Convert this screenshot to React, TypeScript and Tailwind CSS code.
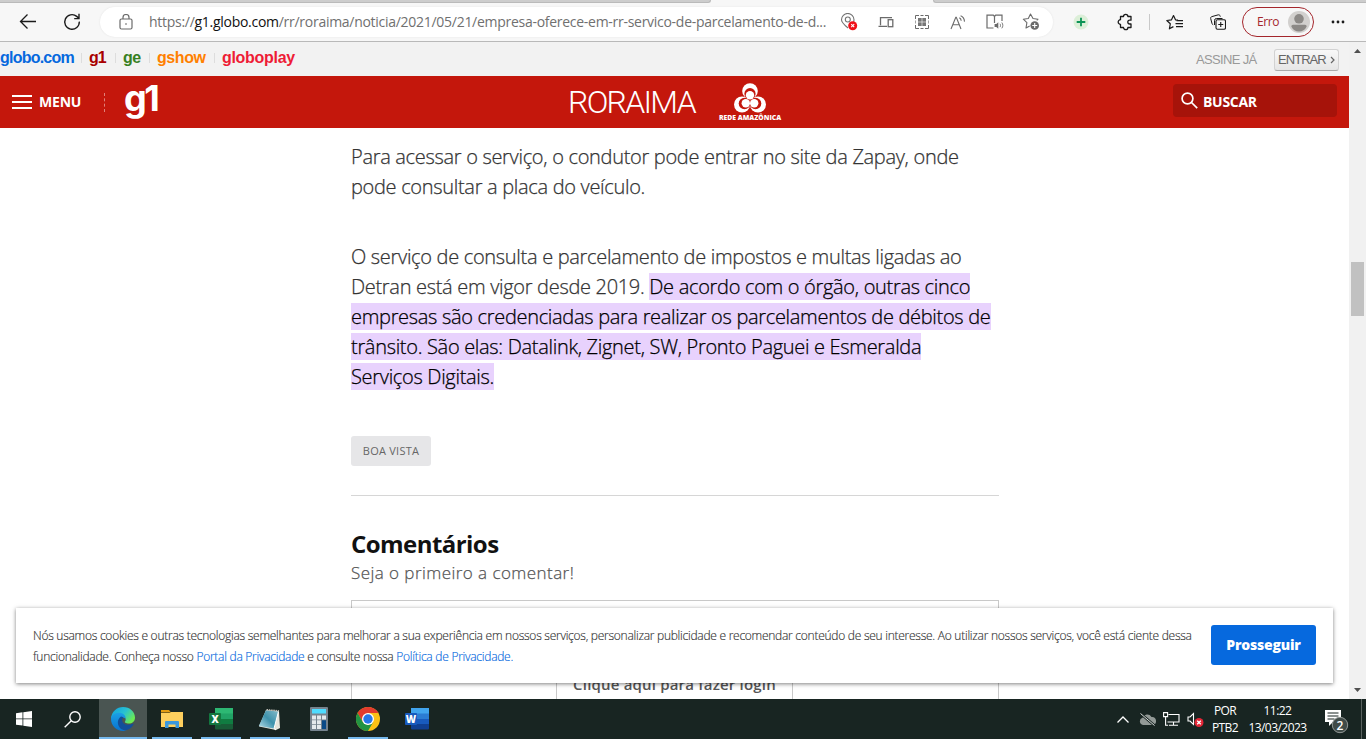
import React from "react";

const OPEN = "font-['Open_Sans',sans-serif]";
const LIB = "font-['Liberation_Sans',sans-serif]";

function Slot({ w, children }: { w: string; children: React.ReactNode }) {
  return <div className={`flex h-full shrink-0 items-center justify-center ${w}`}>{children}</div>;
}

function BrowserBar() {
  return (
    <div className={`flex h-[42px] flex-col border-b border-[#b9b9b9] bg-[#f7f7f7] ${OPEN}`}>
      <div className="flex h-[3px] shrink-0 justify-between">
        <div className="w-[711px] rounded-br-[3px] border-b border-r border-[#bababa] bg-[#cdcdcd]" />
        <div className="w-[433px] rounded-bl-[3px] border-b border-l border-[#bababa] bg-[#cdcdcd]" />
      </div>
      <div className="flex h-[38px] items-center">
        <Slot w="w-[56px]">
          <svg width="18" height="18" viewBox="0 0 18 18" fill="none" stroke="#1b1b1b" strokeWidth="1.3">
            <path d="M17 8.500H1.500M8.500 1.500l-7 7 7 7" />
          </svg>
        </Slot>
        <Slot w="w-[32px]">
          <svg width="18" height="18" viewBox="0 0 18 18" fill="none" stroke="#1b1b1b" strokeWidth="1.4">
            <path d="M16.300 8.600A7.300 7.300 0 1 1 13.700 3.400L15.800 5.300M16 .8v4.800h-4.800" />
          </svg>
        </Slot>
        <div className="ml-[12px] flex h-[30px] w-[953px] items-center rounded-full bg-white shadow-[0_0_2px_#e2e2e2]">
          <Slot w="w-[52px]">
            <svg width="14" height="16" viewBox="0 0 14 16" fill="none" stroke="#6b6b6b" strokeWidth="1.200">
              <rect x="1" y="5" width="12" height="10" rx="1.500" />
              <path d="M4 5V3.500a3 3 0 0 1 6 0V5" />
              <circle cx="7" cy="10" r=".8" fill="#555" stroke="none" />
            </svg>
          </Slot>
          <div className="w-[679px] whitespace-nowrap text-[14px] leading-[20px] tracking-[-0.28px] text-[#707070]">
            <span className="-ml-[3px]">https://</span>
            <span className="text-[#111]">g1.globo.com</span>/rr/roraima/noticia/2021/05/21/empresa-oferece-em-rr-servico-de-parcelamento-de-d...
          </div>
          <Slot w="w-[36.4px]">
            <svg width="18" height="18" viewBox="0 0 18 18" fill="none" stroke="#737373" strokeWidth="1.100">
              <path d="M8 15C4.500 12 1.500 9.500 1.500 6.700A6.200 6.200 0 0 1 14 6.700c0 .8-.2 1.500-.5 2.200" />
              <circle cx="7.800" cy="6.500" r="2.500" />
              <circle cx="12.700" cy="12.700" r="4.500" fill="#f01018" stroke="none" />
              <path d="M11.200 11.200l3 3m0-3l-3 3" stroke="#fff" />
            </svg>
          </Slot>
          <Slot w="w-[36.4px]">
            <svg width="16" height="12" viewBox="0 0 16 12" fill="none" stroke="#6b6b6b" strokeWidth="1.300">
              <path d="M14 1.700H2.500v7.600M.5 10.300H9" />
              <rect x="10.200" y="3.700" width="4.600" height="7" />
            </svg>
          </Slot>
          <Slot w="w-[36.4px]">
            <svg width="14" height="14" viewBox="0 0 14 14" fill="none" stroke="#6b6b6b">
              <path d="M.5 4V.5H4M5.500 .5h3M10 .5h3.500V4M13.500 10v3.500H10M8.500 13.500h-3M4 13.500H.5V10" />
              <path d="M.5 5.500v3M13.500 5.500v3" stroke="#a5a5a5" />
              <g fill="#777" stroke="none">
                <rect x="3" y="3" width="3.700" height="3.700" />
                <rect x="7.300" y="3" width="3.700" height="3.700" />
                <rect x="3" y="7.300" width="3.700" height="3.700" />
                <rect x="7.300" y="7.300" width="3.700" height="3.700" />
              </g>
            </svg>
          </Slot>
          <Slot w="w-[36.4px]">
            <svg width="16" height="15" viewBox="0 0 16 15" fill="none" stroke="#6b6b6b" strokeWidth="1.100">
              <path d="M1 14L5.800 2.200h.5L11 14M2.600 9.700h6.900M9.300 2.800c1.200.6 1.800 1.600 1.900 2.900M10.600.8c2.300.9 3.700 2.800 3.900 5.800" />
            </svg>
          </Slot>
          <Slot w="w-[36.4px]">
            <svg width="18" height="16" viewBox="0 0 18 16" fill="none" stroke="#6b6b6b" strokeWidth="1.200">
              <path d="M7.500 14H1V1.200h6.300L8.500 2.500l1.200-1.300H16V7M8.500 2.500V9" />
              <path d="M8.600 10h1.700l2-1.700v6.400l-2-1.700H8.600z" fill="#6b6b6b" stroke="none" />
              <path d="M14 9.800c.7 1 .7 2.300 0 3.300M15.800 8.500c1.400 1.800 1.400 4 0 5.800" strokeWidth=".9" />
            </svg>
          </Slot>
          <Slot w="w-[36.4px]">
            <svg width="18" height="18" viewBox="0 0 18 18" fill="none" stroke="#6b6b6b" strokeWidth="1.100" strokeLinejoin="round">
              <path d="M14.800 7.300l1.200-1.100-5-.7L8.500 1 6.300 5.500l-5 .7L4.900 9.700 4 15l3.700-2" />
              <circle cx="12.700" cy="12.500" r="4.300" fill="#6b6b6b" stroke="none" />
              <path d="M12.700 10v5m-2.500-2.500h5" stroke="#fff" />
            </svg>
          </Slot>
        </div>
        <Slot w="ml-[6px] w-[44px]">
          <svg width="16" height="16" viewBox="0 0 16 16">
            <circle cx="8" cy="8" r="7.500" fill="#dcefd8" />
            <path d="M8 3.700v8.600M3.700 8h8.600" stroke="#0c9356" strokeWidth="1.800" />
          </svg>
        </Slot>
        <Slot w="w-[44px]">
          <svg width="17" height="18" viewBox="0 0 17 18" fill="none" stroke="#1b1b1b" strokeWidth="1.300" strokeLinejoin="round">
            <path d="M3.500 3.500h3a2.200 2.200 0 0 1 4.400 0H14v3.700h-1.300a1.900 1.900 0 0 0 0 3.800H14v3.500h-3.100a2.200 2.200 0 0 1-4.400 0h-3v-3.200A2.300 2.300 0 0 1 3.500 6.700z" />
          </svg>
        </Slot>
        <div className="ml-[2px] mr-[2px] h-[16px] w-px bg-[#c9c9c9]" />
        <Slot w="w-[44px]">
          <svg width="17" height="17" viewBox="0 0 17 17" fill="none" stroke="#1b1b1b" strokeWidth="1.200" strokeLinejoin="round">
            <path d="M12 6.200l-2.500-.4L7.500 1.500 5.500 5.800.8 6.500l3.500 3.300-.9 5 4-2.200M10.500 6.700H17M9.500 9.700H17M10 12.700h7" />
          </svg>
        </Slot>
        <Slot w="w-[44px]">
          <svg width="16" height="16" viewBox="0 0 16 16" fill="none" stroke="#1b1b1b" strokeWidth="1.100">
            <path d="M3.200 10.800Q2.300 10.500 2 9.500L.7 4.600c-.3-1 .2-1.700 1.200-2L8 .9c1-.3 1.900.1 2.100 1.100l.2.700M12.500 4.500H6.500a2 2 0 0 0-2 2V11" strokeWidth="1" />
            <rect x="6" y="5.800" width="9.500" height="9.500" rx="1.500" />
            <path d="M10.750 8v5M8.250 10.500h5" />
          </svg>
        </Slot>
        <div className="ml-[2px] flex h-[30px] w-[72px] items-center justify-between rounded-full border border-[#a4262c] pl-[14px] pr-[3px]">
          <span className="text-[12px] tracking-[-0.4px] text-[#a4262c]">Erro</span>
          <svg width="22" height="22" viewBox="0 0 22 22">
            <circle cx="11" cy="11" r="11" fill="#d2d0ce" />
            <circle cx="11" cy="7.800" r="4.800" fill="#8c8986" />
            <path d="M3.300 15.500q0-1.700 1.700-1.700h12q1.700 0 1.700 1.700-2.500 5-7.700 5t-7.700-5z" fill="#8c8986" />
          </svg>
        </div>
        <Slot w="ml-[2px] w-[44px]">
          <svg width="14" height="4" viewBox="0 0 14 4" fill="#1b1b1b">
            <circle cx="2" cy="2" r="1.400" />
            <circle cx="7" cy="2" r="1.400" />
            <circle cx="12" cy="2" r="1.400" />
          </svg>
        </Slot>
      </div>
    </div>
  );
}

function GloboBar() {
  return (
    <div className={`flex h-[34px] items-center bg-[#f2f2f2] pb-[3px] text-[16px] font-bold ${LIB}`}>
      <div className="w-[81px] tracking-[-0.78px] text-[#0669de]">globo.com</div>
      <div className="h-[10px] w-px bg-[#ddd]" />
      <div className="w-[33px] pl-[7px] tracking-[-0.9px] text-[#a80000]">g1</div>
      <div className="h-[10px] w-px bg-[#ddd]" />
      <div className="w-[33px] pl-[7px] tracking-[-0.5px] text-[#37801f]">ge</div>
      <div className="h-[10px] w-px bg-[#ddd]" />
      <div className="w-[64px] pl-[7px] tracking-[-0.4px] text-[#ff8000]">gshow</div>
      <div className="h-[10px] w-px bg-[#ddd]" />
      <div className="pl-[7px] tracking-[-0.3px] text-[#ee1c36]">globoplay</div>
      <div className={`ml-auto flex items-center pr-[10px] pt-[5px] text-[13px] font-normal ${LIB}`}>
        <span className="w-[78px] tracking-[-0.65px] text-[#999]">ASSINE JÁ</span>
        <span className="flex h-[22px] w-[65px] items-center justify-between rounded-[3px] border border-[#d2d2d2] border-b-[#aaa] bg-gradient-to-b from-[#f8f8f8] to-[#e6e6e6] px-[3px] text-[#666]">
          <span className="tracking-[-0.95px]">ENTRAR</span>
          <svg width="5" height="8" viewBox="0 0 5 8" fill="none" stroke="#666" strokeWidth="1.200">
            <path d="M1 1l3 3-3 3" />
          </svg>
        </span>
      </div>
    </div>
  );
}

function RedeLogo() {
  return (
    <div className="flex w-[64px] flex-col items-center">
      <svg width="34" height="31" viewBox="0 0 34 31">
        <circle cx="17" cy="8" r="7.800" fill="#fff" />
        <circle cx="9" cy="21.500" r="8" fill="#fff" />
        <circle cx="25" cy="21.500" r="8" fill="#fff" />
        <g fill="#c4170c">
          <circle cx="17" cy="10.700" r="5.600" />
          <circle cx="11.500" cy="20.500" r="5.800" />
          <circle cx="22.500" cy="20.500" r="5.800" />
        </g>
        <g fill="#fff">
          <circle cx="17" cy="12.300" r="4.200" />
          <circle cx="12.800" cy="20.300" r="4.200" />
          <circle cx="21.200" cy="20.300" r="4.200" />
        </g>
      </svg>
      <div className={`whitespace-nowrap text-[6.800px] font-extrabold leading-[8px] text-white ${OPEN}`}>REDE AMAZÔNICA</div>
    </div>
  );
}

function Header() {
  return (
    <div className={`flex h-[52px] items-center bg-[#c4170c] text-white ${OPEN}`}>
      <svg className="ml-[12px]" width="20" height="14" viewBox="0 0 20 14" fill="#fff">
        <path d="M0 0h20v2H0zM0 6h20v2H0zM0 12h20v2H0z" />
      </svg>
      <span className="ml-[7px] w-[65px] pb-[1px] text-[14px] font-bold tracking-[-0.2px]">MENU</span>
      <div className="h-[19px] border-l border-dashed border-[#e08079]" />
      <div className="ml-[19px] w-[46px] pb-[8px] font-['Inter',sans-serif] text-[36px] font-bold leading-[40px] tracking-[-2.500px]">g1</div>
      <div className="ml-[398px] w-[149px] font-['Roboto',sans-serif] text-[32px] font-light leading-[40px] tracking-[-1.700px]">RORAIMA</div>
      <div className="pl-px pt-px"><RedeLogo /></div>
      <div className="mb-[3px] ml-auto mr-[12px] flex h-[33px] w-[164px] items-center rounded-[4px] bg-[#a6130a] pl-[8px]">
        <svg width="17" height="17" viewBox="0 0 17 17" fill="none" stroke="#fff" strokeWidth="1.700">
          <circle cx="6.500" cy="6.500" r="5.400" />
          <path d="M10.500 10.500l5.700 5.700" />
        </svg>
        <span className="ml-[5px] pt-[2px] text-[14px] font-bold tracking-[-0.3px]">BUSCAR</span>
      </div>
    </div>
  );
}

function Article() {
  return (
    <div className={`ml-[351px] w-[648px] pt-[14px] ${OPEN}`}>
      <p className="whitespace-nowrap text-[20px] font-light leading-[30px] tracking-[-0.31px] text-[#333] [-webkit-text-stroke:0.25px_#333]">
        Para acessar o serviço, o condutor pode entrar no site da Zapay, onde
        <br />
        pode consultar a placa do veículo.
      </p>
      <p className="mt-[40px] whitespace-nowrap text-[20px] font-light leading-[30px] tracking-[-0.31px] text-[#333] [-webkit-text-stroke:0.25px_#333]">
        O serviço de consulta e parcelamento de impostos e multas ligadas ao
        <br />
        Detran está em vigor desde 2019.{" "}
        <span className="bg-[#e8d2fd] text-black [-webkit-text-stroke:0.25px_#000]">
          De acordo com o órgão, outras cinco
          <br />
          empresas são credenciadas para realizar os parcelamentos de débitos de
          <br />
          trânsito. São elas: Datalink, Zignet, SW, Pronto Paguei e Esmeralda
          <br />
          Serviços Digitais.
        </span>
      </p>
      <div className="mt-[44px] flex h-[30px] w-[80px] items-center justify-center rounded-[3px] bg-[#e6e6e8] text-[11px] tracking-[0.25px] text-[#666]">
        BOA VISTA
      </div>
      <div className="mt-[29px] h-px bg-[#d6d6d6]" />
      <h2 className="mt-[32px] text-[24px] font-bold leading-[32px] tracking-[-0.55px] text-[#111]">Comentários</h2>
      <p className="text-[17px] font-light leading-[26px] tracking-[0.44px] text-[#555] [-webkit-text-stroke:0.25px_#555]">Seja o primeiro a comentar!</p>
      <div className="mt-[14px] flex h-[110px] justify-center border border-[#c9c9c9]">
        <div className="mr-px mt-[66px] w-[237px] border border-[#c9c9c9] pt-[4px] text-center text-[15px] font-semibold leading-[24px] tracking-[0.18px] text-[#555]">
          Clique aqui para fazer login
        </div>
      </div>
    </div>
  );
}

function CookieBanner() {
  return (
    <div className={`absolute left-[16px] top-[480px] flex h-[75px] w-[1317px] items-center bg-white pl-[17px] pr-[17px] shadow-[0_1px_4px_rgba(0,0,0,0.5)] ${OPEN}`}>
      <p className="flex-1 whitespace-nowrap pt-px text-[12px] font-light leading-[21px] tracking-[-0.26px] text-[#333] [-webkit-text-stroke:0.15px]">
        Nós usamos cookies e outras tecnologias semelhantes para melhorar a sua experiência em nossos serviços, personalizar publicidade e recomendar conteúdo de seu interesse. Ao utilizar nossos serviços, você está ciente dessa
        <br />
        funcionalidade. Conheça nosso <span className="text-[#0669de]">Portal da Privacidade</span> e consulte nossa{" "}
        <span className="text-[#0669de]">Política de Privacidade.</span>
      </p>
      <button className="mb-px h-[40px] w-[105px] shrink-0 rounded-[3px] bg-[#0669de] pb-[2px] text-[14px] font-extrabold tracking-[-0.2px] text-white">Prosseguir</button>
    </div>
  );
}

function Scrollbar() {
  return (
    <div className="flex w-[17px] flex-col items-center bg-[#f1f1f1]">
      <svg className="mt-[7px]" width="7" height="4" viewBox="0 0 7 4" fill="#505050"><path d="M0 4l3.500-4L7 4z" /></svg>
      <div className="mt-[209px] h-[54px] w-[13px] bg-[#c1c1c1]" />
      <svg className="mb-[7px] mt-auto" width="7" height="4" viewBox="0 0 7 4" fill="#505050"><path d="M0 0l3.500 4L7 0z" /></svg>
    </div>
  );
}

function TaskButton({ open, children }: { open?: boolean; children: React.ReactNode }) {
  return (
    <div className="flex h-full w-[49px] flex-col pl-[4px]">
      <div className="flex h-[38px] w-[40px] items-center justify-center pt-[2px]">{children}</div>
      <div className={open ? "h-[2px] w-[40px] bg-[#76b9ed]" : "h-[2px]"} />
    </div>
  );
}

function OfficeIcon({ letter, c }: { letter: string; c: string[] }) {
  return (
    <svg width="24" height="24" viewBox="0 0 24 24">
      <path d="M6 1h18v6H6z" fill={c[0]} />
      <path d="M6 6.500h18V12H6z" fill={c[1]} />
      <path d="M6 12h18v5.500H6z" fill={c[2]} />
      <path d="M6 17h18v4.500q0 1-1 1H7q-1 0-1-1z" fill={c[3]} />
      <rect x="0" y="6" width="12" height="12" rx="1" fill={c[4]} />
      <text x="6" y="15.700" textAnchor="middle" fontFamily="Open Sans" fontWeight="800" fontSize="10" fill="#fff">{letter}</text>
    </svg>
  );
}

function Taskbar() {
  return (
    <div className={`flex h-[40px] items-center bg-[#182522] text-white ${OPEN}`}>
      <Slot w="w-[48px]">
        <svg width="16" height="16" viewBox="0 0 16 16" fill="#fff">
          <path d="M0 2.200L6.500 1.300v6.200H0zM7.300 1.200L16 0v7.500H7.300zM0 8.300h6.500v6.300L0 13.700zM7.300 8.300H16V16l-8.700-1.300z" />
        </svg>
      </Slot>
      <Slot w="w-[48px]">
        <svg width="17" height="17" viewBox="0 0 17 17" fill="none" stroke="#fff" strokeWidth="1.400">
          <circle cx="11" cy="6" r="5.200" />
          <path d="M7.300 9.700L.7 16.300" />
        </svg>
      </Slot>
      <div className="ml-[3px] mr-px flex h-full w-[48px] flex-col bg-[#4a5552]">
        <div className="flex h-[38px] items-center justify-center pt-[2px]">
          <svg width="24" height="24" viewBox="0 0 24 24">
            <defs>
              <linearGradient id="edgeTop" x1="0" y1="0" x2="1" y2=".6">
                <stop offset="0" stopColor="#0f9ee0" /><stop offset=".55" stopColor="#28c1d2" /><stop offset="1" stopColor="#6ceb52" />
              </linearGradient>
              <linearGradient id="edgeMid" x1="0" y1="0" x2="0" y2="1">
                <stop offset="0" stopColor="#1ba0e6" /><stop offset="1" stopColor="#0872ce" />
              </linearGradient>
            </defs>
            <path d="M0 11.500C.5 4.500 6 0 12 0c7 0 12 5 12 10.500 0 4-3 6-6 6-3.500 0-4.500-1.200-4-2 2-3-.5-6-4.500-6C5 8.500 2 9.500 0 11.500z" fill="url(#edgeTop)" />
            <path d="M0 12c0-4 4-6.500 8.500-6.300 4 .2 6.500 2.800 6 6.300C13 9.500 8 11 8 15.500c0 4 3.500 8 8 7.800C8 26 0 20 0 12z" fill="url(#edgeMid)" />
            <path d="M10 9.500C6.500 12 5.500 17 9 21c3.500 3.500 10 3 13.500-3.500.4-.8-.2-1-.8-.7-5.700 2.700-11-.3-10.500-4.300.1-1 .6-1.600 1.300-2.200z" fill="#134f99" />
          </svg>
        </div>
        <div className="h-[2px] bg-[#76b9ed]" />
      </div>
      <TaskButton open>
        <svg width="22" height="19" viewBox="0 0 22 19">
          <path d="M0 0h8l2 2.500H0z" fill="#e29b12" />
          <path d="M0 3h8.500l1.500-1h12v15H0z" fill="#fdcf5e" />
          <path d="M4 18v-6q0-1 1-1h12q1 0 1 1v6h-3.500v-3.500h-7V18z" fill="#3b98dc" />
        </svg>
      </TaskButton>
      <TaskButton open><OfficeIcon letter="X" c={["#2db873", "#21a366", "#107c41", "#185c37", "#13773f"]} /></TaskButton>
      <TaskButton open>
        <svg width="24" height="23" viewBox="0 0 24 23">
          <defs>
            <linearGradient id="note" x1="0" y1="1" x2="1" y2="0">
              <stop offset="0" stopColor="#b8dfe9" /><stop offset=".5" stopColor="#3d91ab" /><stop offset="1" stopColor="#88bdcb" />
            </linearGradient>
          </defs>
          <path d="M8 2l13 1 1 17-4 2L1 18.500z" fill="#e7e5dc" />
          <path d="M8 2.200L20.500 3.500 16 20.500.8 18z" fill="url(#note)" />
          <path d="M20.500 3.500L16 20.500l2 1.500" fill="none" stroke="#fff" />
          <path d="M8.500 1.700l12.500 1.200" stroke="#bcbbb4" strokeWidth="1.500" strokeDasharray="1.500 .8" />
        </svg>
      </TaskButton>
      <TaskButton>
        <svg width="18" height="24" viewBox="0 0 18 24">
          <rect width="18" height="24" rx="1" fill="#76838e" />
          <rect x="2" y="2" width="14" height="4.500" fill="#4fdcff" />
          <g fill="#e5e9ec">
            <path d="M2 8.500h4v4H2zM7 8.500h4v4H7zM12 8.500h4v4h-4zM2 13.300h4v4H2zM7 13.300h4v4H7zM2 18.100h4v4H2zM7 18.100h4v4H7z" />
          </g>
          <path d="M12 13.300h4v8.800h-4z" fill="#0b4a87" />
        </svg>
      </TaskButton>
      <TaskButton open>
        <svg width="24" height="24" viewBox="0 0 24 24">
          <circle cx="12" cy="12" r="12" fill="#fbc116" />
          <path d="M1.600 6a12 12 0 0 1 20.800 0H12l-5.200 9z" fill="#e33b2e" />
          <path d="M1.600 6A12 12 0 0 0 12 24l5.200-9-5.200 3-5.200-3z" fill="#229342" />
          <circle cx="12" cy="12" r="6" fill="#fff" />
          <circle cx="12" cy="12" r="4.700" fill="#2877e8" />
        </svg>
      </TaskButton>
      <TaskButton><OfficeIcon letter="W" c={["#41a5ee", "#2b7cd3", "#185abd", "#103f91", "#185abd"]} /></TaskButton>
      <div className="ml-auto flex h-full items-center">
        <svg width="12" height="7" viewBox="0 0 12 7" fill="none" stroke="#fff" strokeWidth="1.300"><path d="M.5 6.500L6 1l5.500 5.500" /></svg>
        <svg className="ml-[10px]" width="17" height="13" viewBox="0 0 17 13">
          <path d="M4 12a3.700 3.700 0 0 1-.5-7.200A5 5 0 0 1 12.500 4a4 4 0 0 1 1 8z" fill="#929996" />
          <path d="M1 0l15 13" stroke="#182522" strokeWidth="2.500" />
          <path d="M1.500 .5l14 12" stroke="#d7dad9" />
        </svg>
        <svg className="ml-[7px]" width="17" height="14" viewBox="0 0 17 14" fill="none" stroke="#fff" strokeWidth="1.100">
          <path d="M5.500 2.500H16V10H4.500M10.500 10v3M6 13.200h9M.6.600h4v4h-4zM2.600 4.600v8.600h2.500" />
        </svg>
        <svg className="ml-[7px]" width="17" height="15" viewBox="0 0 17 15">
          <path d="M1 5h2l3.500-3.500v11L3 9H1z" fill="none" stroke="#fff" strokeWidth="1.100" />
          <circle cx="12" cy="10.500" r="4.500" fill="#e32636" />
          <path d="M10.200 8.700l3.600 3.600m0-3.600l-3.600 3.600" stroke="#fff" strokeWidth="1.300" />
        </svg>
        <div className="ml-[7px] w-[28px] text-center text-[12px] leading-[17px] tracking-[-0.6px]">POR<br />PTB2</div>
        <div className="ml-[8px] mr-px w-[61px] whitespace-nowrap text-center text-[12px] leading-[17px] tracking-[-0.55px]">11:22<br />13/03/2023</div>
        <svg className="ml-[15px] mt-[5px]" width="26" height="25" viewBox="0 0 26 25">
          <path d="M1 1h16v12H9l-4 4v-4H1z" fill="#fff" />
          <path d="M3.500 4h11M3.500 7h11M3.500 10h7" stroke="#182522" />
          <circle cx="16" cy="16" r="7.700" fill="#404b48" stroke="#919795" />
          <text x="16" y="20.500" textAnchor="middle" fontFamily="Open Sans" fontWeight="600" fontSize="12" fill="#fff">2</text>
        </svg>
        <div className="ml-[11px] mr-[4px] h-full w-px bg-[#59625f]" />
      </div>
    </div>
  );
}

export default function App() {
  return (
    <div className="flex h-[739px] w-[1366px] flex-col overflow-hidden bg-white">
      <BrowserBar />
      <div className="flex h-[657px]">
        <main className="flex w-[1349px] flex-col">
          <GloboBar />
          <Header />
          <div className="relative h-[571px] overflow-hidden">
            <Article />
            <CookieBanner />
          </div>
        </main>
        <Scrollbar />
      </div>
      <Taskbar />
    </div>
  );
}
